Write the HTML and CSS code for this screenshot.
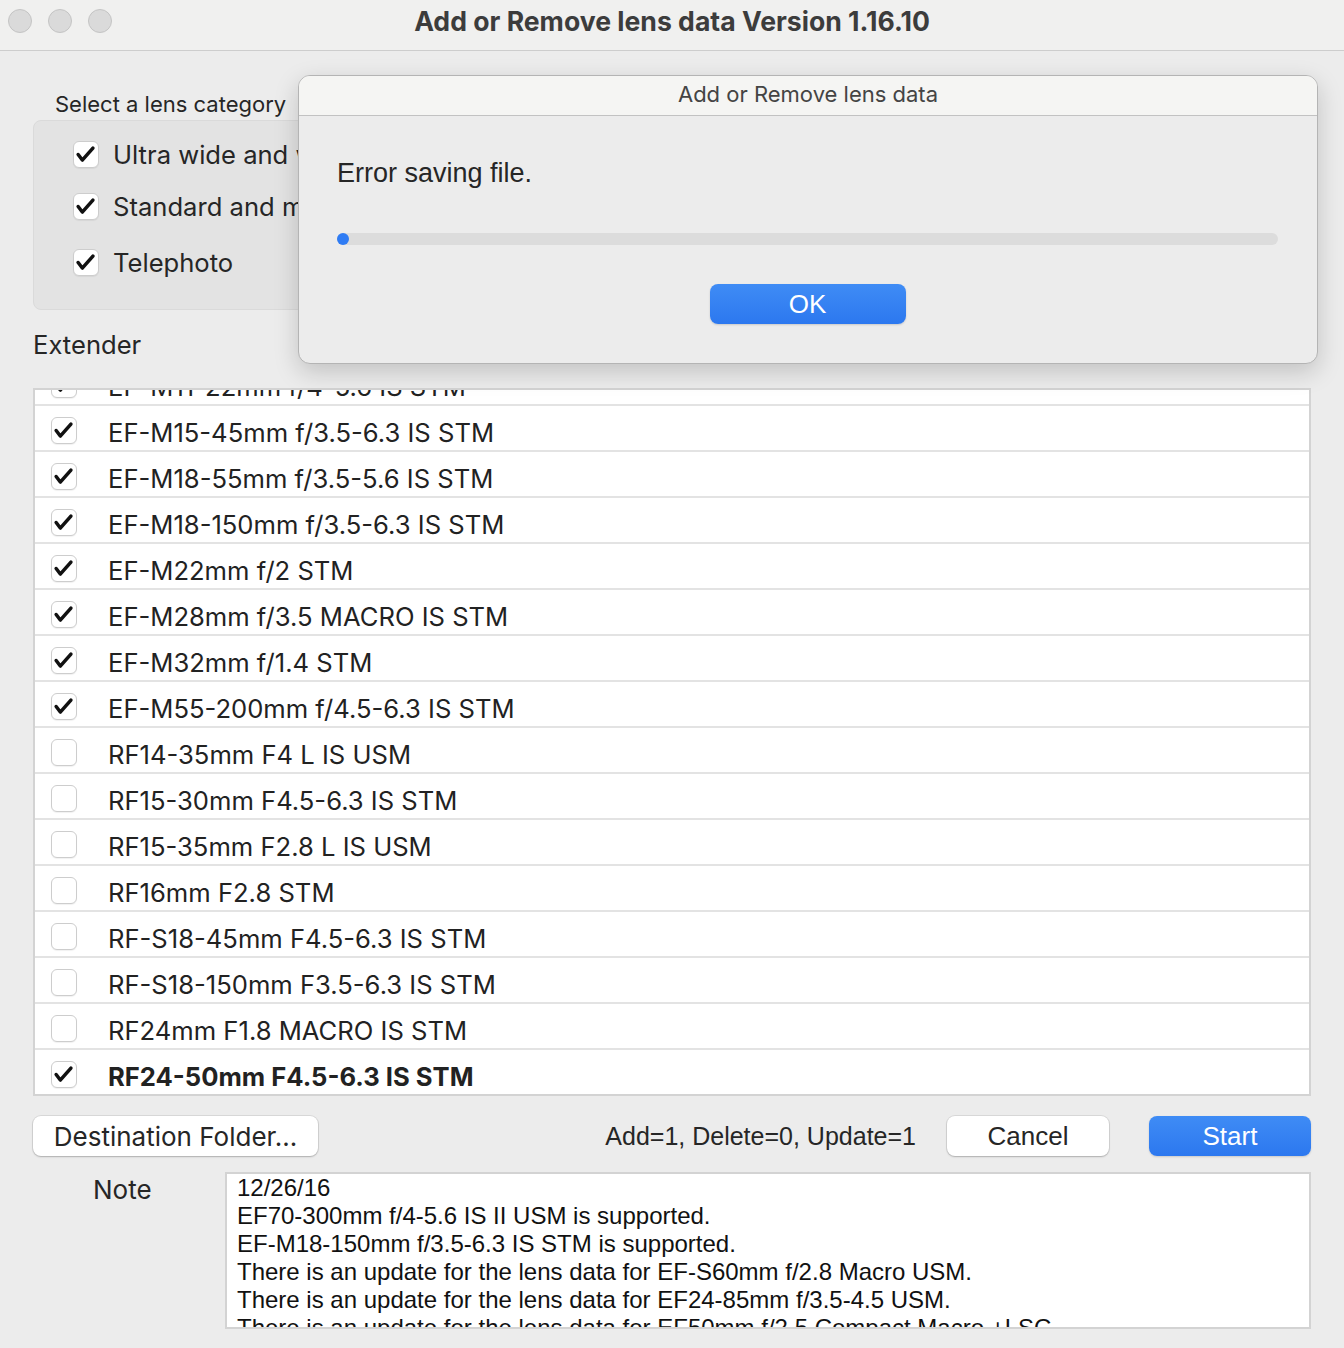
FILE: index.html
```html
<!DOCTYPE html>
<html lang="en">
<head>
    <meta charset="UTF-8">
    <meta name="viewport" content="width=device-width, initial-scale=1.0">
    <title>Add or Remove lens data Version 1.16.10</title>
    <link rel="stylesheet" href="styles.css">
</head>
<body>
    <div class="titlebar">
        <div class="lights">
            <span class="light"></span>
            <span class="light"></span>
            <span class="light"></span>
        </div>
        <div class="window-title">Add or Remove lens data Version 1.16.10</div>
    </div>

<div class="main">
    <div class="category-label">Select a lens category</div>
    <div class="category-box">
        <label class="cat-row"><span class="check on"></span>Ultra wide and wide angle</label>
        <label class="cat-row"><span class="check on"></span>Standard and medium telephoto</label>
        <label class="cat-row tele"><span class="check on"></span>Telephoto</label>
    </div>

    <div class="extender">Extender</div>

    <div class="lens-list">
        <div class="rows" id="lensRows">
            <!-- rows are filled in by the script below -->
        </div>
    </div>

    <div class="actions">
        <button class="btn folder">Destination Folder...</button>
        <span class="counts">Add=1, Delete=0, Update=1</span>
        <button class="btn cancel">Cancel</button>
        <button class="btn primary start">Start</button>
    </div>

    <div class="note-row">
        <div class="note-label">Note</div>
        <div class="note-box">
            12/26/16<br>
            EF70-300mm f/4-5.6 IS II USM is supported.<br>
            EF-M18-150mm f/3.5-6.3 IS STM is supported.<br>
            There is an update for the lens data for EF-S60mm f/2.8 Macro USM.<br>
            There is an update for the lens data for EF24-85mm f/3.5-4.5 USM.<br>
            There is an update for the lens data for EF50mm f/2.5 Compact Macro +LSC.
        </div>
    </div>
</div>

<div class="dialog">
    <div class="dialog-title">Add or Remove lens data</div>
    <div class="dialog-body">
        <div class="dialog-msg">Error saving file.</div>
        <div class="progress"><span class="progress-dot"></span></div>
        <div class="dialog-buttons">
            <button class="btn primary ok">OK</button>
        </div>
    </div>
</div>

<script>
    // Lens list, as it is shown (scrolled a little down)
    const lenses = [
        ['EF-M11-22mm f/4-5.6 IS STM', true],
        ['EF-M15-45mm f/3.5-6.3 IS STM', true],
        ['EF-M18-55mm f/3.5-5.6 IS STM', true],
        ['EF-M18-150mm f/3.5-6.3 IS STM', true],
        ['EF-M22mm f/2 STM', true],
        ['EF-M28mm f/3.5 MACRO IS STM', true],
        ['EF-M32mm f/1.4 STM', true],
        ['EF-M55-200mm f/4.5-6.3 IS STM', true],
        ['RF14-35mm F4 L IS USM', false],
        ['RF15-30mm F4.5-6.3 IS STM', false],
        ['RF15-35mm F2.8 L IS USM', false],
        ['RF16mm F2.8 STM', false],
        ['RF-S18-45mm F4.5-6.3 IS STM', false],
        ['RF-S18-150mm F3.5-6.3 IS STM', false],
        ['RF24mm F1.8 MACRO IS STM', false],
        ['RF24-50mm F4.5-6.3 IS STM', true, 'new']
    ];

    const rowsContainer = document.getElementById('lensRows');
    lenses.forEach(lens => {
        const row = document.createElement('div');
        row.classList.add('lens-row');
        if (lens[2] === 'new') row.classList.add('new');
        row.innerHTML = `<span class="check ${lens[1] ? 'on' : ''}"></span><span class="lens-name">${lens[0]}</span>`;
        rowsContainer.appendChild(row);
    });
</script>

</body>
</html>
```

FILE: styles.css
```css
body {
    font-family: 'Inter', 'Liberation Sans', sans-serif;
    background-color: #ececec;
    color: #262626;
    margin: 0;
    padding: 0;
    height: 1348px;
    overflow: hidden;
}
button {
    font-family: inherit;
}
.titlebar {
    height: 50px;
    background-color: #f0f0ef;
    border-bottom: 1px solid #cdcdcd;
    display: flex;
    align-items: flex-start;
    position: relative;
}
.lights {
    display: flex;
    gap: 16px;
    padding: 9px 0 0 8px;
}
.light {
    width: 22px;
    height: 22px;
    border-radius: 50%;
    background-color: #dadada;
    border: 1px solid #c4c4c4;
}
.window-title {
    position: absolute;
    left: 0;
    right: 0;
    top: 4px;
    text-align: center;
    font-size: 26.6px;
    line-height: 34px;
    font-weight: bold;
    color: #3c3c3c;
}
.main {
    padding: 0 33px;
}
.category-label {
    font-size: 22px;
    margin: 39px 0 0 22px;
    line-height: 28px;
}
.category-box {
    margin-top: 2px;
    width: 560px;
    height: 190px;
    box-sizing: border-box;
    background-color: #e3e3e3;
    border: 1px solid #dadada;
    border-radius: 8px;
    padding: 19px 0 0 39px;
    display: flex;
    flex-direction: column;
}
.cat-row {
    display: flex;
    align-items: center;
    gap: 14px;
    font-size: 25.6px;
    height: 28px;
    margin-bottom: 24px;
    white-space: nowrap;
}
.cat-row.tele {
    margin-top: 4px;
}
.check {
    width: 26px;
    height: 27px;
    flex-shrink: 0;
    box-sizing: border-box;
    background-color: #ffffff;
    border: 1px solid #cdcdcd;
    border-radius: 6px;
    box-shadow: 0 1px 1px rgba(0, 0, 0, 0.06);
}
.check.on {
    background-image: url("data:image/svg+xml;utf8,<svg xmlns='http://www.w3.org/2000/svg' viewBox='0 0 26 27'><path d='M4.5 13.5 L9 19.5 L20.5 6.5' fill='none' stroke='%23111' stroke-width='3.8' stroke-linecap='round' stroke-linejoin='round'/></svg>");
    background-size: 100% 100%;
}
.extender {
    font-size: 25.6px;
    margin-top: 20px;
    line-height: 30px;
}
.lens-list {
    margin-top: 28px;
    height: 708px;
    box-sizing: border-box;
    border: 2px solid #d3d3d3;
    background-color: #ffffff;
    overflow: hidden;
}
.rows {
    margin-top: -32px;
}
.lens-row {
    border-top: 2px solid #e3e3e3;
    display: flex;
    align-items: center;
    padding: 4px 0 0 16px;
    height: 40px;
    font-size: 25.6px;
    color: #222;
    gap: 31px;
}
.lens-name {
    padding-top: 4px;
}
.lens-row.new {
    font-weight: bold;
}
.actions {
    display: flex;
    align-items: center;
    margin-top: 20px;
    height: 40px;
}
.btn {
    height: 40px;
    font-size: 26px;
    color: #262626;
    background-color: #ffffff;
    border: none;
    border-radius: 8px;
    box-shadow: 0 0 0 1px rgba(0, 0, 0, 0.08), 0 1px 2px rgba(0, 0, 0, 0.2);
    padding: 0;
}
.btn.primary {
    color: #ffffff;
    background: linear-gradient(#3f8cf5, #2c78ef);
    box-shadow: 0 1px 2px rgba(0, 0, 0, 0.15);
}
.folder {
    width: 285px;
}
.counts {
    margin-left: auto;
    font-family: 'Liberation Sans', sans-serif;
    font-size: 25px;
    margin-right: 31px;
}
.cancel, .start {
    width: 162px;
    font-family: 'Liberation Sans', sans-serif;
}
.start {
    margin-left: 40px;
}
.note-row {
    display: flex;
    margin-top: 16px;
}
.note-label {
    width: 192px;
    padding-left: 60px;
    box-sizing: border-box;
    font-size: 26px;
    line-height: 36px;
}
.note-box {
    flex: 1;
    height: 157px;
    box-sizing: border-box;
    background-color: #ffffff;
    border: 2px solid #d3d3d3;
    padding: 0 0 0 10px;
    font-family: 'Liberation Sans', sans-serif;
    font-size: 24px;
    line-height: 28px;
    color: #111;
    overflow: hidden;
}
.dialog {
    position: absolute;
    left: 298px;
    top: 75px;
    width: 1020px;
    height: 289px;
    box-sizing: border-box;
    border: 1px solid #b4b4b4;
    border-radius: 12px;
    background-color: #ececec;
    box-shadow: 0 8px 24px rgba(0, 0, 0, 0.18);
    overflow: hidden;
}
.dialog-title {
    height: 39px;
    background-color: #f5f5f3;
    border-bottom: 1px solid #c2c2c2;
    text-align: center;
    font-size: 22px;
    line-height: 36px;
    color: #444;
}
.dialog-body {
    padding: 0 39px 0 38px;
}
.dialog-msg {
    font-family: 'Liberation Sans', sans-serif;
    font-size: 27px;
    margin-top: 41px;
    line-height: 32px;
}
.progress {
    margin-top: 44px;
    height: 12px;
    border-radius: 6px;
    background-color: #dcdcdc;
}
.progress-dot {
    display: block;
    width: 12px;
    height: 12px;
    border-radius: 50%;
    background-color: #2f7cf4;
}
.dialog-buttons {
    margin-top: 39px;
    text-align: center;
}
.ok {
    width: 196px;
    font-family: 'Liberation Sans', sans-serif;
}
```
